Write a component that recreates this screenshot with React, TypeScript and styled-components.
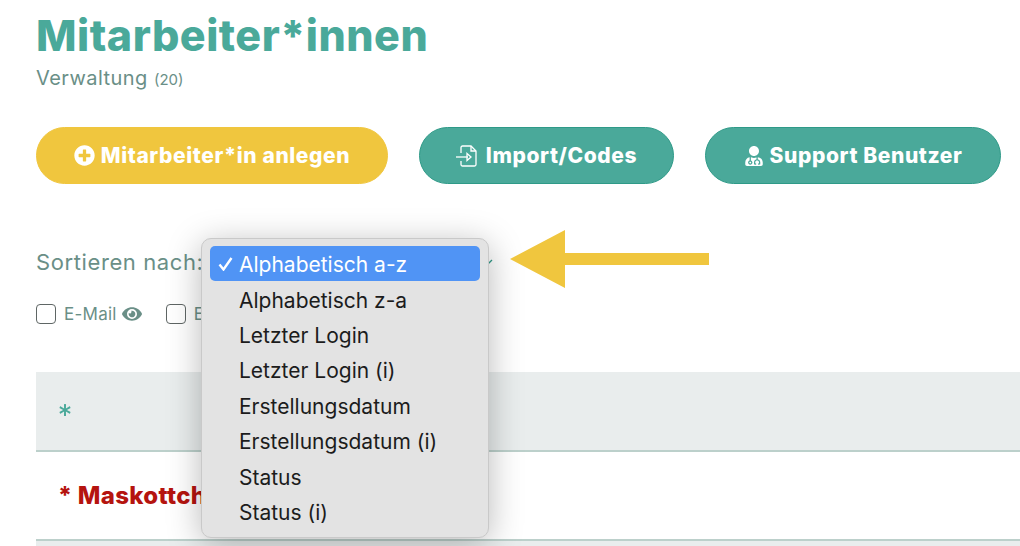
import styled, { createGlobalStyle } from 'styled-components'
import { FaAsterisk, FaEye, FaPlusCircle, FaUserMd } from 'react-icons/fa'

const colors = {
  teal: '#4aa99a',
  tealDark: '#2f9a88',
  yellow: '#f0c63e',
  muted: '#6a8f87',
  red: '#b5140f',
}

const menuOptions = [
  'Alphabetisch a-z',
  'Alphabetisch z-a',
  'Letzter Login',
  'Letzter Login (i)',
  'Erstellungsdatum',
  'Erstellungsdatum (i)',
  'Status',
  'Status (i)',
]

const GlobalStyle = createGlobalStyle`
  html, body {
    margin: 0;
    background: #ffffff;
    overflow: hidden;
  }
`

const Page = styled.div`
  position: relative;
  width: 1020px;
  height: 546px;
  overflow: hidden;
  padding-left: 36px;
  box-sizing: border-box;
  font-family: Inter, sans-serif;
`

const Title = styled.h1`
  margin: 0;
  padding-top: 10px;
  font-size: 43px;
  line-height: 50px;
  font-weight: 800;
  letter-spacing: 0.5px;
  color: ${colors.teal};
`

const Subtitle = styled.p`
  margin: 5px 0 0;
  font-size: 20px;
  line-height: 26px;
  letter-spacing: 0.45px;
  color: ${colors.muted};
  & > small {
    font-size: 15px;
    letter-spacing: 0;
  }
`

const ButtonRow = styled.div`
  display: flex;
  gap: 31px;
  margin-top: 34px;
`

const ActionButton = styled.button<{ $width: number; $accent?: boolean }>`
  display: flex;
  align-items: center;
  justify-content: center;
  gap: 6px;
  width: ${({ $width }) => $width}px;
  height: 57px;
  padding: 0;
  border-radius: 29px;
  border: 1px solid ${({ $accent }) => ($accent ? colors.yellow : colors.tealDark)};
  background: ${({ $accent }) => ($accent ? colors.yellow : colors.teal)};
  color: #ffffff;
  font-family: inherit;
  font-size: 21px;
  font-weight: 800;
  letter-spacing: 0.6px;
`

const SortRow = styled.div`
  display: flex;
  align-items: center;
  margin-top: 65px;
  height: 26px;
  font-size: 22px;
  letter-spacing: 0.6px;
  color: ${colors.muted};
`

const SelectBox = styled.span`
  display: flex;
  justify-content: flex-end;
  flex: 0 0 auto;
  width: 291px;
`

const FilterRow = styled.div`
  display: flex;
  align-items: center;
  gap: 24px;
  margin-top: 29px;
  height: 20px;
`

const Filter = styled.label`
  display: flex;
  align-items: center;
  gap: 5px;
  font-size: 17px;
  letter-spacing: 0.25px;
  color: ${colors.muted};
`

const Box = styled.span`
  width: 18px;
  height: 18px;
  margin-right: 3px;
  border: 1px solid #5f6665;
  border-radius: 4px;
  background: #ffffff;
`

const Table = styled.div`
  margin-top: 48px;
`

const HeaderRow = styled.div`
  display: flex;
  align-items: center;
  box-sizing: border-box;
  height: 80px;
  padding: 0 0 3px 23px;
  background: #e9eded;
  border-bottom: 2px solid #bcd0cb;
  color: ${colors.teal};
  font-size: 12px;
`

const BodyRow = styled.div`
  display: flex;
  align-items: center;
  height: 87px;
  padding-left: 22px;
  border-bottom: 2px solid #bcd0cb;
  color: ${colors.red};
  font-size: 24px;
  font-weight: 800;
  letter-spacing: 0.3px;
`

const NextRow = styled.div`
  height: 20px;
  background: #e9eded;
`

const Menu = styled.ul`
  position: absolute;
  left: 201px;
  top: 238px;
  width: 270px;
  margin: 0;
  padding: 7px 8px 8px;
  list-style: none;
  background: #e3e3e3;
  border: 1px solid #c9c9c9;
  border-radius: 10px;
  box-shadow: 0 6px 34px rgba(0, 0, 0, 0.28);
  font-size: 21px;
  color: #1c1c1c;
`

const MenuItem = styled.li<{ $selected?: boolean }>`
  display: flex;
  align-items: center;
  position: relative;
  box-sizing: border-box;
  height: 35.4px;
  padding: 2px 0 0 29px;
  border-radius: 5px;
  background: ${({ $selected }) => ($selected ? '#5094f5' : 'transparent')};
  color: ${({ $selected }) => ($selected ? '#ffffff' : 'inherit')};
`

const Tick = styled.svg`
  position: absolute;
  left: 8px;
  top: 11px;
  width: 15px;
  height: 14px;
`

const Arrow = styled.svg`
  position: absolute;
  left: 508px;
  top: 229px;
  width: 202px;
  height: 59px;
`

const Chevron = styled.svg`
  width: 8px;
  height: 8px;
  margin-top: 1px;
  color: ${colors.tealDark};
`

function ImportIcon() {
  return (
    <svg width='24' height='22' viewBox='0 0 24 22' fill='none' stroke='currentColor' strokeWidth='1.3'>
      <path d='M5 8V2.500A1.500 1.500 0 0 1 6.500 1H15l5 5v13.500a1.500 1.500 0 0 1-1.500 1.500h-12A1.500 1.500 0 0 1 5 19.500V16' />
      <path d='M15 1v5h5' />
      <path d='M0 12h12' />
      <path d='M11 8.500l4 3.500-4 3.500z' />
    </svg>
  )
}

export default function App() {
  return (
    <Page>
      <GlobalStyle />
      <Title>Mitarbeiter*innen</Title>
      <Subtitle>
        Verwaltung <small>(20)</small>
      </Subtitle>
      <ButtonRow>
        <ActionButton $accent $width={352}>
          <FaPlusCircle size={21} />
          Mitarbeiter*in anlegen
        </ActionButton>
        <ActionButton $width={255}>
          <ImportIcon />
          Import/Codes
        </ActionButton>
        <ActionButton $width={296}>
          <FaUserMd size={20} />
          Support Benutzer
        </ActionButton>
      </ButtonRow>
      <SortRow>
        Sortieren nach:
        <SelectBox>
          <Chevron viewBox='0 0 8 8' fill='none' stroke='currentColor' strokeWidth='1.3'>
            <path d='M0 7l6-6' />
          </Chevron>
        </SelectBox>
      </SortRow>
      <FilterRow>
        <Filter>
          <Box />
          E-Mail
          <FaEye size={20} />
        </Filter>
        <Filter>
          <Box />
          Erstellt
        </Filter>
      </FilterRow>
      <Table>
        <HeaderRow>
          <FaAsterisk />
        </HeaderRow>
        <BodyRow>* Maskottchen</BodyRow>
        <NextRow />
      </Table>
      <Menu>
        {menuOptions.map((option, index) => (
          <MenuItem key={option} $selected={index === 0}>
            {index === 0 && (
              <Tick viewBox='0 0 15 14' fill='none' stroke='currentColor' strokeWidth='2.4'>
                <path d='M1.500 7.500l4 5 8-11.500' />
              </Tick>
            )}
            {option}
          </MenuItem>
        ))}
      </Menu>
      <Arrow viewBox='0 0 202 59' fill={colors.yellow}>
        <path d='M2 30L57 1v23h144v12H57v23z' />
      </Arrow>
    </Page>
  )
}
